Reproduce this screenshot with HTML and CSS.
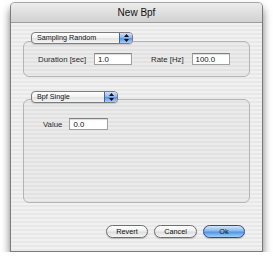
FILE: index.html
```html
<!DOCTYPE html>
<html>

<head>
    <title>New Bpf</title>
    <link rel="stylesheet" href="styles.css">
</head>

<body>
    <div class="window">
        <div class="titlebar">New Bpf</div>

        <div class="content">
            <div class="group">
                <div class="popup popup-sampling">
                    <span class="popup-label">Sampling Random</span>
                    <span class="popup-arrows">
                        <svg width="5" height="8" viewBox="0 0 5 8">
                            <path d="M2.5 0 L5 3 L0 3 Z M0 5 L5 5 L2.5 8 Z" fill="#111"/>
                        </svg>
                    </span>
                </div>
                <div class="box box-sampling">
                    <div class="row">
                        <span class="label">Duration [sec]</span>
                        <input class="field" type="text" value="1.0">
                        <span class="label label-rate">Rate [Hz]</span>
                        <input class="field" type="text" value="100.0">
                    </div>
                </div>
            </div>

            <div class="group group-bpf">
                <div class="popup popup-bpf">
                    <span class="popup-label">Bpf Single</span>
                    <span class="popup-arrows">
                        <svg width="5" height="8" viewBox="0 0 5 8">
                            <path d="M2.5 0 L5 3 L0 3 Z M0 5 L5 5 L2.5 8 Z" fill="#111"/>
                        </svg>
                    </span>
                </div>
                <div class="box box-bpf">
                    <div class="row">
                        <span class="label">Value</span>
                        <input class="field field-value" type="text" value="0.0">
                    </div>
                </div>
            </div>

            <div class="buttons">
                <button class="btn">Revert</button>
                <button class="btn">Cancel</button>
                <button class="btn btn-default">Ok</button>
            </div>
        </div>
    </div>
</body>

</html>
```

FILE: styles.css
```css
body {
    margin: 0;
    padding: 0;
    background-color: #fff;
    font-family: "Liberation Sans", Arial, sans-serif;
}

.window {
    margin: 2px 0 0 10px;
    width: 253px;
    height: 250px;
    box-sizing: border-box;
    border: 1px solid #7c7c7c;
    border-top-color: #a8a8a8;
    border-radius: 5px 5px 0 0;
    box-shadow: 0 6px 9px rgba(0, 0, 0, 0.55);
    background: repeating-linear-gradient(180deg, #f1f1f1 0, #f1f1f1 2px, #e8e8e8 2px, #e8e8e8 4px);
    overflow: hidden;
}

.titlebar {
    height: 19px;
    line-height: 19px;
    text-align: center;
    font-size: 10px;
    color: #111;
    background: linear-gradient(180deg, #ececec 0%, #dcdcdc 60%, #d2d2d2 100%);
    border-bottom: 1px solid #9c9c9c;
}

.content {
    padding: 9px 12px 0 12px;
}

/* group box with popup sitting on the top edge */
.group {
    display: flex;
    flex-direction: column;
}

.group-bpf {
    margin-top: 14px;
}

.popup {
    position: relative;
    z-index: 1;
    display: flex;
    align-items: stretch;
    height: 12px;
    margin-left: 8px;
    box-sizing: border-box;
    border: 1px solid #7d7d7d;
    border-radius: 4px;
    background: linear-gradient(180deg, #ffffff 0%, #f2f2f2 50%, #e2e2e2 51%, #f4f4f4 100%);
    box-shadow: 0 1px 1px rgba(0, 0, 0, 0.15);
    overflow: hidden;
}

.popup-sampling {
    width: 102px;
}

.popup-bpf {
    width: 87px;
}

.popup-label {
    flex: 1;
    font-size: 7.2px;
    line-height: 10px;
    padding-left: 5px;
    color: #111;
}

.popup-arrows {
    width: 12px;
    display: flex;
    align-items: center;
    justify-content: center;
    border-left: 1px solid #3a63b0;
    background: linear-gradient(180deg, #cfe0fa 0%, #8fb3ec 50%, #5d8fe0 51%, #a9cdf7 100%);
}

.popup-arrows svg {
    display: block;
}

.box {
    margin-top: -3px;
    box-sizing: border-box;
    border: 1px solid #b4b4b4;
    border-radius: 6px;
    background-color: rgba(0, 0, 0, 0.025);
}

.box-sampling {
    height: 36px;
    padding: 11px 0 0 14px;
}

.box-bpf {
    margin-top: -4px;
    height: 104px;
    padding: 18px 0 0 19px;
}

.row {
    display: flex;
    align-items: center;
}

.label {
    font-size: 7.8px;
    color: #2a2a2a;
}

.label-rate {
    margin-left: 19px;
}

.field {
    width: 38px;
    height: 12px;
    margin: 0 0 0 8px;
    padding: 0 0 0 3px;
    box-sizing: border-box;
    border: 1px solid #a0a0a0;
    border-top-color: #808080;
    background-color: #fff;
    font-family: "Liberation Sans", Arial, sans-serif;
    font-size: 7.8px;
    color: #111;
    box-shadow: inset 0 1px 1px rgba(0, 0, 0, 0.15);
}

.field-value {
    width: 39px;
    margin-left: 7px;
}

.buttons {
    display: flex;
    justify-content: flex-end;
    gap: 6px;
    margin-top: 22px;
    margin-right: 5px;
}

.btn {
    width: 42px;
    height: 13px;
    padding: 0;
    box-sizing: border-box;
    border: 1px solid #6e6e6e;
    border-radius: 7px;
    background: linear-gradient(180deg, #ffffff 0%, #f0f0f0 45%, #dedede 55%, #f6f6f6 100%);
    font-family: "Liberation Sans", Arial, sans-serif;
    font-size: 7.3px;
    line-height: 11px;
    color: #111;
    box-shadow: 0 1px 1px rgba(0, 0, 0, 0.2);
}

.btn:nth-child(2) {
    width: 43px;
}

.btn-default {
    border-color: #274f92;
    background: linear-gradient(180deg, #d6e6fb 0%, #8db6ee 45%, #5a90e2 55%, #9fd0fa 100%);
}
```
